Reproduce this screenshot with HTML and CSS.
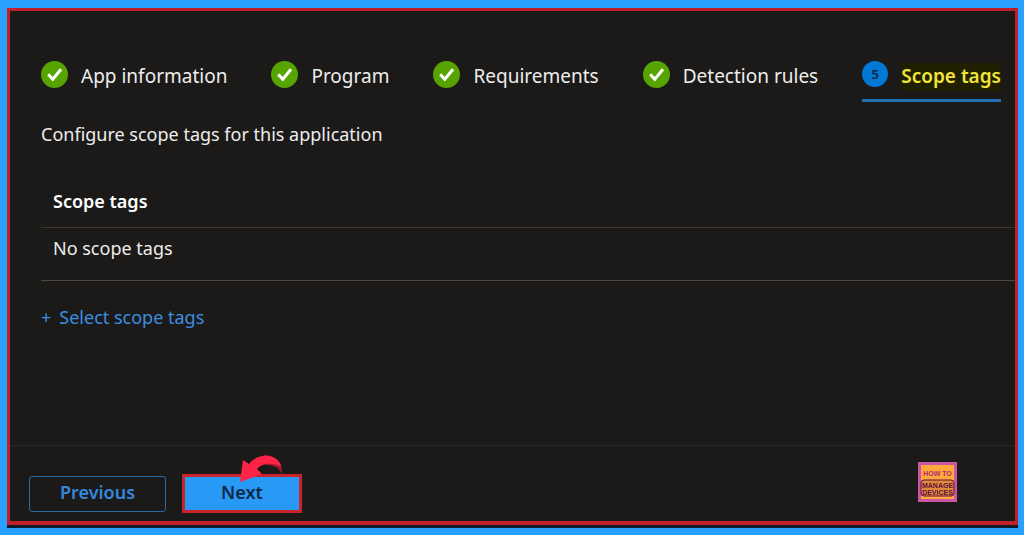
FILE: index.html
```
<!DOCTYPE html>
<html lang="en">
<head>
  <meta charset="UTF-8" />
  <meta name="viewport" content="width=device-width, initial-scale=1.0" />
  <title>Scope tags</title>
  <link rel="stylesheet" href="styles.css">
</head>
<body>
  <div class="wizard">
    <nav class="steps">
      <a class="step" href="#info">
        <svg class="step-icon" viewBox="0 0 27 27"><circle cx="13.5" cy="13.5" r="13.5" fill="#57a300"/><path d="M7.2 13.4l4.6 4.8 8.2-10" fill="none" stroke="#fff" stroke-width="3"/></svg>
        <span>App information</span>
      </a>
      <a class="step" href="#program">
        <svg class="step-icon" viewBox="0 0 27 27"><circle cx="13.5" cy="13.5" r="13.5" fill="#57a300"/><path d="M7.2 13.4l4.6 4.8 8.2-10" fill="none" stroke="#fff" stroke-width="3"/></svg>
        <span>Program</span>
      </a>
      <a class="step" href="#requirements">
        <svg class="step-icon" viewBox="0 0 27 27"><circle cx="13.5" cy="13.5" r="13.5" fill="#57a300"/><path d="M7.2 13.4l4.6 4.8 8.2-10" fill="none" stroke="#fff" stroke-width="3"/></svg>
        <span>Requirements</span>
      </a>
      <a class="step" href="#detection">
        <svg class="step-icon" viewBox="0 0 27 27"><circle cx="13.5" cy="13.5" r="13.5" fill="#57a300"/><path d="M7.2 13.4l4.6 4.8 8.2-10" fill="none" stroke="#fff" stroke-width="3"/></svg>
        <span>Detection rules</span>
      </a>
      <a class="step active" href="#scope" aria-current="step">
        <span class="step-number">5</span>
        <span class="highlight">Scope tags</span>
      </a>
    </nav>

    <main class="content">
      <p class="intro">Configure scope tags for this application</p>
      <table class="tags">
        <thead>
          <tr><th>Scope tags</th></tr>
        </thead>
        <tbody>
          <tr><td>No scope tags</td></tr>
        </tbody>
      </table>
      <a class="select-link" href="#select"><span>+</span><span>Select scope tags</span></a>
    </main>

    <footer class="actions">
      <button class="btn previous" type="button">Previous</button>
      <div class="next-wrap">
        <button class="btn next" type="button">Next</button>
        <svg class="arrow" viewBox="0 0 46 30">
          <path d="M25 1C36 1 44 8 43 20C40 14 35 11 26 11Z" fill="#9c1730"/>
          <path d="M1 28L4 6L10 10C16 2 28-1 37 5C40 7 42 10 42 13C35 9 24 8 18 15L23 20Z" fill="#ff2445"/>
        </svg>
      </div>
      <svg class="logo" viewBox="0 0 39 40" role="img" aria-label="How to manage devices">
        <rect width="39" height="40" fill="#c957a5"/>
        <rect x="3" y="3" width="33" height="34" fill="#ffa83c"/>
        <rect x="3" y="18" width="33" height="16" rx="3" fill="#e08a38" stroke="#611044"/>
        <text x="19.5" y="14" class="logo-top">HOW TO</text>
        <text x="19.5" y="26" class="logo-text">MANAGE</text>
        <text x="19.5" y="33" class="logo-text">DEVICES</text>
      </svg>
    </footer>
  </div>
</body>
</html>
```
FILE: styles.css
```
* {
  box-sizing: border-box;
}
body {
  margin: 0;
  padding: 8px 6px 7px 7px;
  min-height: 100vh;
  display: flex;
  background-color: #2aa0ff;
  color: #eeedec;
  font-family: "Noto Sans", "Open Sans", sans-serif;
  font-size: 18px;
  line-height: 26px;
}
a {
  text-decoration: none;
}
.wizard {
  flex: 1;
  display: flex;
  flex-direction: column;
  background-color: #1b1a19;
  border: 3px solid #c1202b;
  border-bottom-width: 4px;
  box-shadow: 0 3px 0 #101a28;
  margin-bottom: 3px;
}
.steps {
  display: flex;
  justify-content: space-between;
  padding: 50px 14px 0 31px;
  font-size: 19px;
}
.step {
  display: flex;
  gap: 13px;
  height: 41px;
  color: #eeedec;
  white-space: nowrap;
}
.step span {
  margin-top: 2px;
}
.step-icon {
  width: 27px;
  height: 27px;
}
.step.active {
  border-bottom: 3px solid #1f6fb5;
}
.step .step-number {
  width: 26px;
  height: 26px;
  margin-top: 0;
  border-radius: 50%;
  background-color: #0078d4;
  color: #10243a;
  font-size: 13px;
  font-weight: 600;
  text-align: center;
}
.highlight {
  height: 28px;
  background-color: #201f00;
  color: #f0e537;
  font-weight: 600;
}
.content {
  flex: 1;
  padding: 19px 0 0 31px;
}
.intro {
  margin: 0;
}
.tags {
  width: 100%;
  margin-top: 31px;
  border-collapse: collapse;
  text-align: left;
}
.tags th {
  height: 49px;
  padding: 0 12px 2px;
  border-bottom: 1px solid #3b3735;
  color: #fff;
  font-weight: 600;
}
.tags td {
  height: 53px;
  padding: 0 12px 12px;
  border-bottom: 1px solid #4b4846;
}
.select-link {
  display: inline-flex;
  gap: 8px;
  margin-top: 23px;
  color: #3a8ee0;
}
.actions {
  display: flex;
  align-items: center;
  gap: 16px;
  height: 76px;
  padding: 20px 58px 0 19px;
  border-top: 1px solid #292827;
}
.btn {
  padding: 0 0 4px;
  font-family: inherit;
  font-size: 18px;
  font-weight: 600;
  cursor: pointer;
}
.previous {
  width: 137px;
  height: 36px;
  border: 1px solid #2b6aa3;
  border-radius: 3px;
  background: none;
  color: #3588dc;
}
.next-wrap {
  position: relative;
}
.next {
  display: block;
  width: 120px;
  height: 39px;
  border: 3px solid #c8242e;
  background-color: #2899f5;
  color: #0c2847;
}
.arrow {
  position: absolute;
  left: 57px;
  top: -20px;
  width: 46px;
  height: 30px;
}
.logo {
  width: 39px;
  height: 40px;
  margin: -24px 0 0 auto;
}
.logo text {
  font-family: "Liberation Sans", sans-serif;
  font-weight: bold;
  text-anchor: middle;
}
.logo-top {
  font-size: 7px;
  fill: #b52a72;
}
.logo-text {
  font-size: 7px;
  fill: #611044;
}
```
